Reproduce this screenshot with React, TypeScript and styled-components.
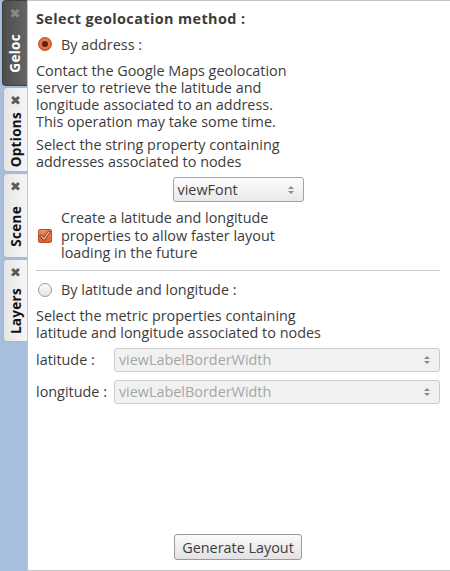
import React from "react";
import styled, { createGlobalStyle } from "styled-components";

const Global = createGlobalStyle`
  html, body { margin: 0; padding: 0; background: #ffffff; }
  body { font-family: "Open Sans", "DejaVu Sans", sans-serif; }
`;

const Frame = styled.div`
  display: flex;
  width: 450px;
  height: 571px;
  background: #a7bfdd;
  box-sizing: border-box;
`;

const TabBar = styled.div`
  width: 27px;
  flex: none;
  display: flex;
  flex-direction: column;
  gap: 1px;
`;

const Tab = styled.div<{ $active?: boolean; $h: number }>`
  height: ${(p) => p.$h}px;
  margin-left: ${(p) => (p.$active ? 2 : 3)}px;
  box-sizing: border-box;
  display: flex;
  flex-direction: column;
  align-items: center;
  padding-top: 6px;
  border-radius: 4px 0 0 4px;
  background: ${(p) =>
    p.$active
      ? "linear-gradient(to right, #4d4d4d, #666666)"
      : "linear-gradient(to right, #e6e6e6, #f6f6f6)"};
  border: 1px solid ${(p) => (p.$active ? "#3f3f3f" : "#b4b4b4")};
  border-right: none;
  color: ${(p) => (p.$active ? "#ffffff" : "#111111")};
`;

const TabClose = styled.div<{ $active?: boolean }>`
  font-size: 13px;
  line-height: 13px;
  font-weight: bold;
  color: ${(p) => (p.$active ? "#8a8a8a" : "#5a5a5a")};
  font-family: "DejaVu Sans", sans-serif;
`;

const TabLabelWrap = styled.div`
  flex: 1;
  display: flex;
  align-items: center;
  justify-content: center;
  padding-top: 2px;
`;

const TabLabel = styled.div`
  writing-mode: vertical-rl;
  transform: rotate(180deg);
  font-size: 13.5px;
  font-weight: 700;
  letter-spacing: 0.3px;
  line-height: 16px;
`;

const Panel = styled.div`
  flex: 1;
  background: #ffffff;
  border: 1px solid #c4c4c4;
  box-sizing: border-box;
  display: flex;
  flex-direction: column;
  padding: 9px 10px 9px 8px;
  color: #3c3c3c;
  font-size: 14.4px;
  line-height: 17px;
`;

const Title = styled.div`
  font-weight: 700;
  letter-spacing: 0.4px;
`;

const RadioRow = styled.label<{ $mt: number }>`
  display: flex;
  align-items: center;
  gap: 9px;
  height: 20px;
  margin-top: ${(p) => p.$mt}px;
  padding-left: 2px;
`;

const RadioDot = styled.span<{ $checked?: boolean }>`
  width: 14px;
  height: 14px;
  border-radius: 50%;
  box-sizing: border-box;
  flex: none;
  display: flex;
  align-items: center;
  justify-content: center;
  background: ${(p) =>
    p.$checked
      ? "radial-gradient(circle at 50% 40%, #f08a5d, #de5a2b)"
      : "linear-gradient(#fbfbfb, #e6e6e6)"};
  border: 1px solid ${(p) => (p.$checked ? "#b5502a" : "#9a9a9a")};
  &::after {
    content: "";
    display: ${(p) => (p.$checked ? "block" : "none")};
    width: 6px;
    height: 6px;
    border-radius: 50%;
    background: #5a2410;
  }
`;

const Para = styled.p<{ $mt: number }>`
  margin: ${(p) => p.$mt}px 0 0 0;
`;

const ComboLine = styled.div<{ $mt: number }>`
  display: flex;
  justify-content: center;
  margin-top: ${(p) => p.$mt}px;
`;

const Combo = styled.div<{ $disabled?: boolean; $w?: number }>`
  position: relative;
  width: ${(p) => (p.$w ? `${p.$w}px` : "auto")};
  height: ${(p) => (p.$disabled ? 24 : 25)}px;
  box-sizing: border-box;
  border-radius: 3px;
  border: 1px solid ${(p) => (p.$disabled ? "#cbcbcb" : "#a3a3a3")};
  background: ${(p) =>
    p.$disabled ? "#f1f1f1" : "linear-gradient(#fdfdfd, #e9e9e9)"};
  color: ${(p) => (p.$disabled ? "#a6a6a6" : "#3c3c3c")};
  display: flex;
  align-items: center;
  padding-left: 4px;
`;

const Arrows = styled.svg`
  position: absolute;
  right: 8px;
  top: 50%;
  margin-top: -5px;
`;

const CheckRow = styled.label`
  display: flex;
  align-items: center;
  gap: 9px;
  margin-top: 7px;
  padding-left: 2px;
  line-height: 17.5px;
`;

const CheckBox = styled.span`
  width: 14px;
  height: 14px;
  flex: none;
  box-sizing: border-box;
  border-radius: 2px;
  border: 1px solid #b4532c;
  background: linear-gradient(#f08a5d, #df5e2f);
  display: flex;
  align-items: center;
  justify-content: center;
  margin-top: 2px;
`;

const Separator = styled.hr`
  border: none;
  border-top: 1px solid #c9c9c9;
  margin: 8px 0 0 0;
  width: 404px;
`;

const FieldGrid = styled.div`
  display: grid;
  grid-template-columns: auto 1fr;
  column-gap: 7px;
  row-gap: 8px;
  align-items: center;
  margin-top: 7px;
`;

const Spacer = styled.div`
  flex: 1;
`;

const ButtonLine = styled.div`
  display: flex;
  justify-content: center;
`;

const Button = styled.button`
  height: 26px;
  width: 128px;
  box-sizing: border-box;
  border: 1px solid #9a9a9a;
  border-radius: 3px;
  background: linear-gradient(#fafafa, #e2e2e2);
  color: #3c3c3c;
  font-family: inherit;
  font-size: 14.4px;
  padding: 0;
  margin-bottom: 1px;
`;

const UpDown = () => (
  <Arrows width="8" height="10" viewBox="0 0 8 10">
    <path d="M4 1 L7 4 L1 4 Z" fill="#8a8a8a" />
    <path d="M4 9 L7 6 L1 6 Z" fill="#8a8a8a" />
  </Arrows>
);

const tabs = [
  { label: "Geloc", h: 86, active: true },
  { label: "Options", h: 85 },
  { label: "Scene", h: 85 },
  { label: "Layers", h: 83 },
];

export default function App() {
  return (
    <>
      <Global />
      <Frame>
        <TabBar>
          {tabs.map((t) => (
            <Tab key={t.label} $active={t.active} $h={t.h}>
              <TabClose $active={t.active}>✖</TabClose>
              <TabLabelWrap>
                <TabLabel>{t.label}</TabLabel>
              </TabLabelWrap>
            </Tab>
          ))}
        </TabBar>
        <Panel>
          <Title>Select geolocation method :</Title>
          <RadioRow $mt={7}>
            <RadioDot $checked />
            <span>By address :</span>
          </RadioRow>
          <Para $mt={8}>
            Contact the Google Maps geolocation
            <br />
            server to retrieve the latitude and
            <br />
            longitude associated to an address.
            <br />
            This operation may take some time.
          </Para>
          <Para $mt={6}>
            Select the string property containing
            <br />
            addresses associated to nodes
          </Para>
          <ComboLine $mt={7}>
            <Combo $w={131}>
              viewFont
              <UpDown />
            </Combo>
          </ComboLine>
          <CheckRow>
            <CheckBox>
              <svg width="12" height="12" viewBox="0 0 12 12">
                <path
                  d="M2 6 L5 9 L10 2"
                  fill="none"
                  stroke="#6a2a12"
                  strokeWidth="3"
                  strokeLinecap="round"
                  strokeLinejoin="round"
                />
                <path
                  d="M2 6 L5 9 L10 2"
                  fill="none"
                  stroke="#f6c0a4"
                  strokeWidth="1.3"
                  strokeLinecap="round"
                  strokeLinejoin="round"
                />
              </svg>
            </CheckBox>
            <span>
              Create a latitude and longitude
              <br />
              properties to allow faster layout
              <br />
              loading in the future
            </span>
          </CheckRow>
          <Separator />
          <RadioRow $mt={9}>
            <RadioDot />
            <span>By latitude and longitude :</span>
          </RadioRow>
          <Para $mt={7}>
            Select the metric properties containing
            <br />
            latitude and longitude associated to nodes
          </Para>
          <FieldGrid>
            <span>latitude :</span>
            <Combo $disabled>
              viewLabelBorderWidth
              <UpDown />
            </Combo>
            <span>longitude :</span>
            <Combo $disabled>
              viewLabelBorderWidth
              <UpDown />
            </Combo>
          </FieldGrid>
          <Spacer />
          <ButtonLine>
            <Button>Generate Layout</Button>
          </ButtonLine>
        </Panel>
      </Frame>
    </>
  );
}
